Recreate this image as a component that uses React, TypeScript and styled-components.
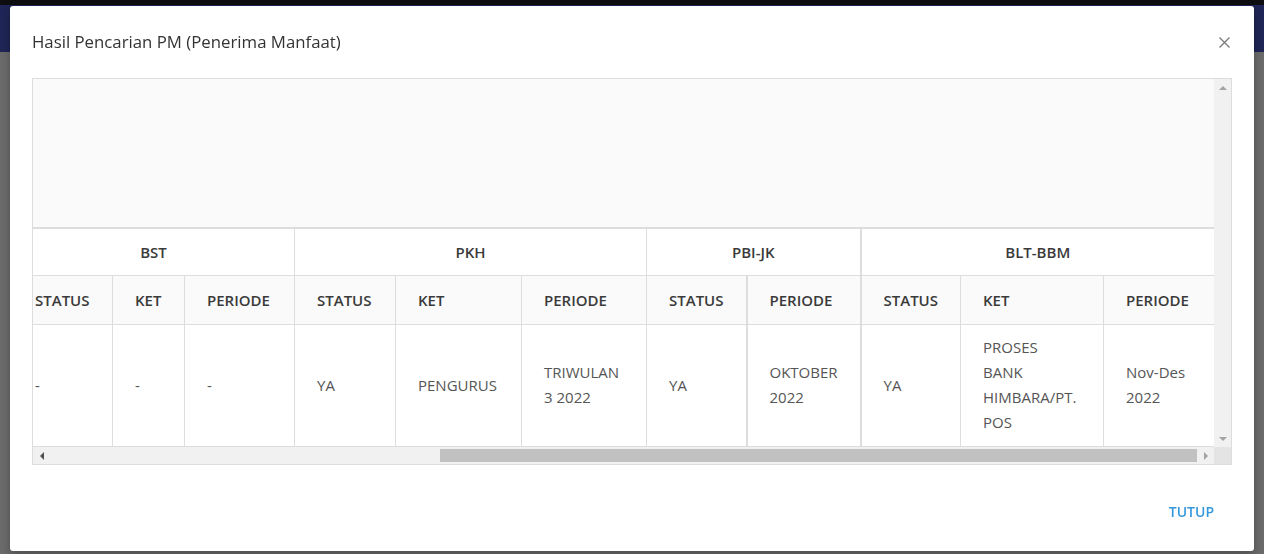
import React from 'react';
import styled, { createGlobalStyle } from 'styled-components';

const GlobalStyle = createGlobalStyle`
    html, body {
        margin: 0;
        padding: 0;
        height: 100%;
    }
    body {
        font-family: "Open Sans", "Liberation Sans", Arial, sans-serif;
        overflow: hidden;
    }
`;

type Col = { label: string; width: number; thick?: boolean };
type Group = { label: string; cols: Col[]; thick?: boolean };

const groups: Group[] = [
    { label: 'BST', cols: [{ label: 'STATUS', width: 100 }, { label: 'KET', width: 72 }, { label: 'PERIODE', width: 110 }] },
    { label: 'PKH', cols: [{ label: 'STATUS', width: 101 }, { label: 'KET', width: 126 }, { label: 'PERIODE', width: 125 }] },
    { label: 'PBI-JK', cols: [{ label: 'STATUS', width: 100 }, { label: 'PERIODE', width: 114, thick: true }] },
    { label: 'BLT-BBM', thick: true, cols: [{ label: 'STATUS', width: 100, thick: true }, { label: 'KET', width: 143 }, { label: 'PERIODE', width: 111 }] },
];

const row: string[][] = [
    ['-'], ['-'], ['-'],
    ['YA'], ['PENGURUS'], ['TRIWULAN', '3 2022'],
    ['YA'], ['OKTOBER', '2022'],
    ['YA'], ['PROSES', 'BANK', 'HIMBARA/PT.', 'POS'], ['Nov-Des', '2022'],
];

const allCols = groups.flatMap(g => g.cols);

const Arrow = ({ dir }: { dir: 'up' | 'down' | 'left' | 'right' }) => {
    const pts = {
        up: '0,4 4,0 8,4',
        down: '0,0 8,0 4,4',
        left: '4,0 4,8 0,4',
        right: '0,0 4,4 0,8',
    }[dir];
    const vertical = dir === 'up' || dir === 'down';
    return (
        <svg width={vertical ? 8 : 4} height={vertical ? 4 : 8} viewBox={vertical ? '0 0 8 4' : '0 0 4 8'}>
            <polygon points={pts} fill={dir === 'left' ? '#505050' : '#a3a3a3'} />
        </svg>
    );
};

export default function App() {
    return (
        <>
            <GlobalStyle />
            <Page>
                <TopStrip />
                <NavBar />
                <PageBody />
            </Page>
            <Backdrop>
                <Modal>
                    <ModalHeader>
                        <Title>Hasil Pencarian PM (Penerima Manfaat)</Title>
                        <CloseButton aria-label="close">
                            <svg width="11" height="11" viewBox="0 0 11 11">
                                <path d="M0.5 0.5 L10.5 10.5 M10.5 0.5 L0.5 10.5" stroke="#7a7a7a" strokeWidth="1.3" />
                            </svg>
                        </CloseButton>
                    </ModalHeader>
                    <ModalBody>
                        <TableFrame>
                            <Viewport>
                                <TopBand />
                                <Grid>
                                    <colgroup>
                                        {allCols.map((c, i) => <col key={i} style={{ width: c.width }} />)}
                                    </colgroup>
                                    <thead>
                                        <GroupRow>
                                            {groups.map(g => (
                                                <GroupCell key={g.label} colSpan={g.cols.length} $thick={g.thick}>{g.label}</GroupCell>
                                            ))}
                                        </GroupRow>
                                        <HeadRow>
                                            {allCols.map((c, i) => <HeadCell key={i} $thick={c.thick}>{c.label}</HeadCell>)}
                                        </HeadRow>
                                    </thead>
                                    <tbody>
                                        <tr>
                                            {row.map((lines, i) => (
                                                <DataCell key={i} $thick={allCols[i].thick}>
                                                    {lines.map((l, j) => <div key={j}>{l}</div>)}
                                                </DataCell>
                                            ))}
                                        </tr>
                                    </tbody>
                                </Grid>
                            </Viewport>
                            <VScroll>
                                <ArrowBox><Arrow dir="up" /></ArrowBox>
                                <VTrack />
                                <ArrowBox><Arrow dir="down" /></ArrowBox>
                            </VScroll>
                            <HScroll>
                                <ArrowBox><Arrow dir="left" /></ArrowBox>
                                <HTrack>
                                    <HThumb />
                                </HTrack>
                                <ArrowBox><Arrow dir="right" /></ArrowBox>
                            </HScroll>
                            <Corner />
                        </TableFrame>
                    </ModalBody>
                    <ModalFooter>
                        <FlatButton>TUTUP</FlatButton>
                    </ModalFooter>
                </Modal>
            </Backdrop>
        </>
    );
}

const Page = styled.div`
    height: 100vh;
    display: flex;
    flex-direction: column;
    background: #6b6b6b;
`;

const TopStrip = styled.div`
    height: 5px;
    background: #0e0e10;
`;

const NavBar = styled.div`
    height: 47px;
    background: #1f2556;
`;

const PageBody = styled.div`
    flex: 1;
    background: #6b6b6b;
`;

const Backdrop = styled.div`
    position: fixed;
    inset: 0;
    padding: 6px 10px 0 10px;
`;

const Modal = styled.div`
    width: 1244px;
    height: 545px;
    background: #fff;
    border-radius: 3px;
    box-shadow: 0 3px 9px rgba(0, 0, 0, 0.3);
    display: flex;
    flex-direction: column;
`;

const ModalHeader = styled.div`
    display: flex;
    align-items: center;
    justify-content: space-between;
    padding: 24px 24px 0 22px;
    height: 24px;
`;

const Title = styled.h4`
    margin: 0;
    font-size: 16.8px;
    font-weight: 400;
    color: #333;
    line-height: 24px;
`;

const CloseButton = styled.div`
    display: flex;
    align-items: center;
    padding-top: 1px;
`;

const ModalBody = styled.div`
    padding: 24px 22px 0 22px;
`;

const TableFrame = styled.div`
    border: 1px solid #dddddd;
    display: grid;
    grid-template-columns: 1fr 17px;
    grid-template-rows: 368px 17px;
`;

const Viewport = styled.div`
    overflow: hidden;
    background: #fafafa;
`;

const TopBand = styled.div`
    height: 148px;
    background: #fafafa;
`;

const Grid = styled.table`
    table-layout: fixed;
    width: 1202px;
    margin-left: -21px;
    border-collapse: collapse;
    background: #fff;
`;

const GroupRow = styled.tr`
    height: 47px;
`;

const GroupCell = styled.th<{ $thick?: boolean }>`
    border: 1px solid #dddddd;
    border-left-width: ${p => (p.$thick ? '2px' : '1px')};
    border-top-width: 2px;
    text-align: center;
    font-size: 15px;
    font-weight: 600;
    color: #3a3a3a;
    background: #fff;
    padding: 0;
`;

const HeadRow = styled.tr`
    height: 49px;
`;

const HeadCell = styled.th<{ $thick?: boolean }>`
    border: 1px solid #dddddd;
    border-left-width: ${p => (p.$thick ? '2px' : '1px')};
    text-align: left;
    font-size: 15px;
    font-weight: 600;
    color: #3a3a3a;
    background: #fafafa;
    padding: 0 0 0 22px;
    white-space: nowrap;
    overflow: hidden;
`;

const DataCell = styled.td<{ $thick?: boolean }>`
    border: 1px solid #dddddd;
    border-left-width: ${p => (p.$thick ? '2px' : '1px')};
    height: 122px;
    padding: 0 8px 0 22px;
    box-sizing: border-box;
    vertical-align: middle;
    font-size: 15px;
    line-height: 25px;
    color: #555;
`;

const VScroll = styled.div`
    background: #f1f1f1;
    display: flex;
    flex-direction: column;
`;

const HScroll = styled.div`
    background: #f1f1f1;
    display: flex;
    align-items: center;
`;

const ArrowBox = styled.div`
    width: 17px;
    height: 17px;
    flex: none;
    display: flex;
    align-items: center;
    justify-content: center;
`;

const VTrack = styled.div`
    flex: 1;
`;

const HTrack = styled.div`
    flex: 1;
    height: 13px;
    display: flex;
    justify-content: flex-end;
`;

const HThumb = styled.div`
    width: 757px;
    height: 13px;
    background: #c1c1c1;
`;

const Corner = styled.div`
    background: #e4e4e4;
`;

const ModalFooter = styled.div`
    display: flex;
    justify-content: flex-end;
    padding: 31px 22px 0 22px;
`;

const FlatButton = styled.div`
    padding: 6px 18px;
    font-size: 14px;
    font-weight: 600;
    color: #3598dc;
    line-height: 20px;
    cursor: pointer;
`;
